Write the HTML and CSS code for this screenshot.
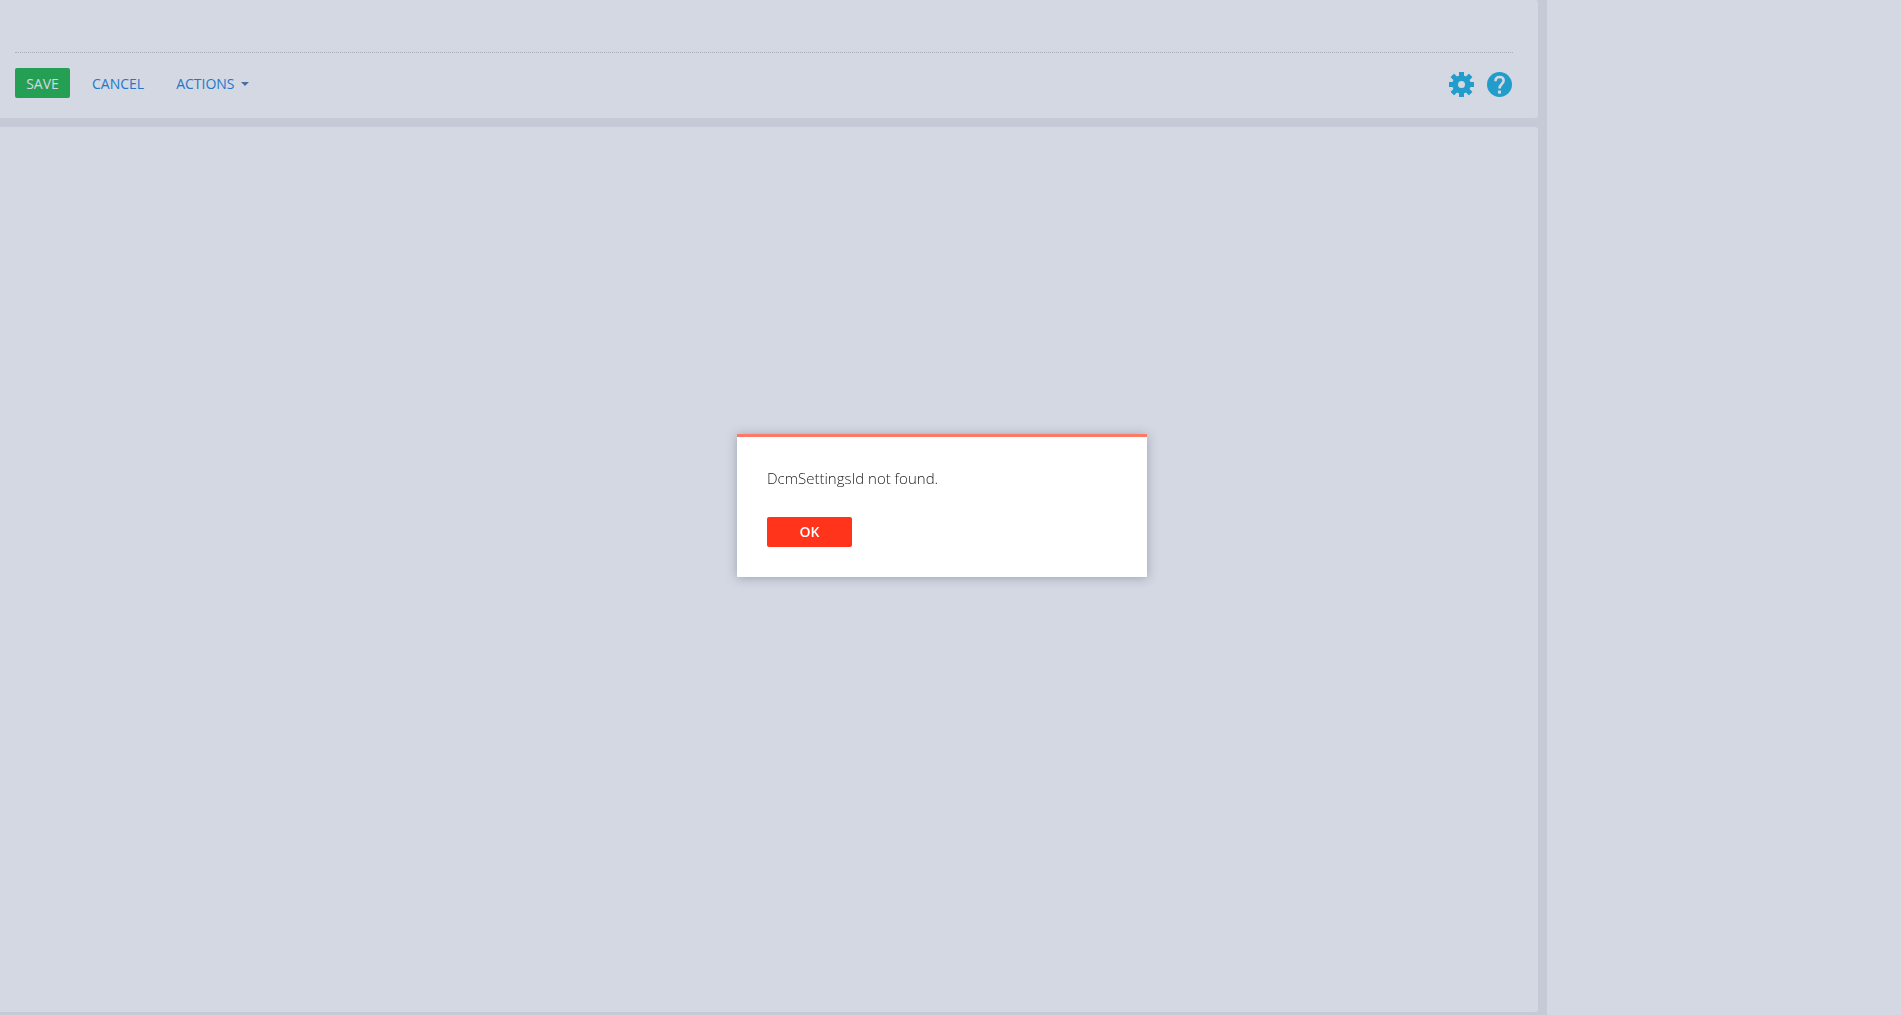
FILE: index.html
```html
<!DOCTYPE html>
<html lang="en">
<head>
  <meta charset="UTF-8">
  <meta name="viewport" content="width=device-width, initial-scale=1.0">
  <title>DCM Settings</title>
  <link rel="stylesheet" href="styles.css">
</head>
<body>
  <div class="page">
    <main class="main">
      <!-- Toolbar -->
      <header class="card header">
        <div class="toolbar">
          <div class="actions">
            <button class="btn btn-save" type="button">SAVE</button>
            <button class="btn btn-link" type="button">CANCEL</button>
            <button class="btn btn-link btn-menu" type="button">ACTIONS <span class="caret"></span></button>
          </div>
          <div class="tools">
            <button class="icon-btn" type="button" aria-label="Settings">
              <svg width="25" height="25" viewBox="0 0 25 25">
                <g fill="#229dcb">
                  <rect x="10" y="0" width="5" height="25"/>
                  <rect x="0" y="10" width="25" height="5"/>
                  <rect x="10" y="-0.5" width="5" height="26" rx="0.5" transform="rotate(45 12.5 12.5)"/>
                  <rect x="10" y="-0.5" width="5" height="26" rx="0.5" transform="rotate(135 12.5 12.5)"/>
                  <circle cx="12.5" cy="12.5" r="9.3"/>
                </g>
                <circle cx="12.5" cy="12.5" r="3.5" fill="#d4d8e3"/>
              </svg>
            </button>
            <button class="icon-btn" type="button" aria-label="Help">
              <svg width="25" height="25" viewBox="0 0 25 25">
                <circle cx="12.5" cy="12.5" r="12.5" fill="#229dcb"/>
                <path d="M8.5 9.2C8.5 6.6 10.2 5 12.6 5C15 5 16.6 6.5 16.6 8.7C16.6 11.9 12.5 12 12.5 16.6" fill="none" stroke="#d4d8e3" stroke-width="2.6"/>
                <rect x="11" y="18.6" width="3" height="3" fill="#d4d8e3"/>
              </svg>
            </button>
          </div>
        </div>
      </header>

      <!-- Content area -->
      <section class="card content"></section>
    </main>
    <aside class="side"></aside>
  </div>

  <!-- Error message -->
  <div class="overlay">
    <div class="dialog" role="alertdialog" aria-modal="true" aria-labelledby="message">
      <p class="message" id="message">DcmSettingsId not found.</p>
      <button class="btn btn-ok" type="button">OK</button>
    </div>
  </div>
</body>
</html>
```
FILE: styles.css
```css
* {
  box-sizing: border-box;
}
body {
  margin: 0;
  font-family: "Open Sans", sans-serif;
  font-size: 14px;
  background-color: #c5cad6;
}
.page {
  display: grid;
  grid-template-columns: 1fr 354px;
  gap: 9px;
  min-height: 100vh;
}
.main {
  display: flex;
  flex-direction: column;
  gap: 9px;
  padding-bottom: 3px;
}
.card {
  background-color: #d4d8e3;
  border-radius: 0 3px 3px 0;
}
.header {
  padding: 52px 25px 20px 15px;
}
.toolbar {
  display: flex;
  justify-content: space-between;
  align-items: center;
  padding-top: 15px;
  border-top: 1px dotted #a9adb9;
}
.actions {
  display: flex;
  gap: 12px;
}
.tools {
  display: flex;
  gap: 13px;
  padding: 3px 1px 0 0;
}
.content {
  flex: 1;
}
.side {
  background-color: #d4d8e3;
}
.btn {
  height: 30px;
  padding: 0 10px;
  border: none;
  border-radius: 2px;
  font-family: inherit;
  font-size: 14px;
  line-height: 30px;
  cursor: pointer;
}
.btn-save,
.btn-link {
  padding-top: 2px;
  line-height: 28px;
}
.btn-save {
  width: 55px;
  color: #d4d8e3;
  background-color: #249f54;
}
.btn-link {
  color: #2277c9;
  background: none;
}
.btn-menu {
  display: flex;
  align-items: center;
  gap: 6px;
}
.caret {
  border-top: 4px solid #476f9f;
  border-left: 4px solid transparent;
  border-right: 4px solid transparent;
}
.icon-btn {
  padding: 0;
  border: none;
  background: none;
  cursor: pointer;
}
.icon-btn svg {
  display: block;
}
.overlay {
  position: fixed;
  inset: 0;
  display: flex;
  justify-content: center;
  align-items: center;
  padding: 0 17px 5px 0;
}
.dialog {
  width: 410px;
  padding: 30px;
  background-color: white;
  border-top: 3px solid #ff7a66;
  box-shadow: 0 1px 10px rgba(50, 60, 80, 0.35);
}
.message {
  margin: 0 0 28px;
  color: #222;
  font-size: 15px;
  font-weight: 300;
  line-height: 22px;
}
.btn-ok {
  display: block;
  width: 85px;
  color: white;
  background-color: #ff341b;
  font-weight: 600;
}
```
